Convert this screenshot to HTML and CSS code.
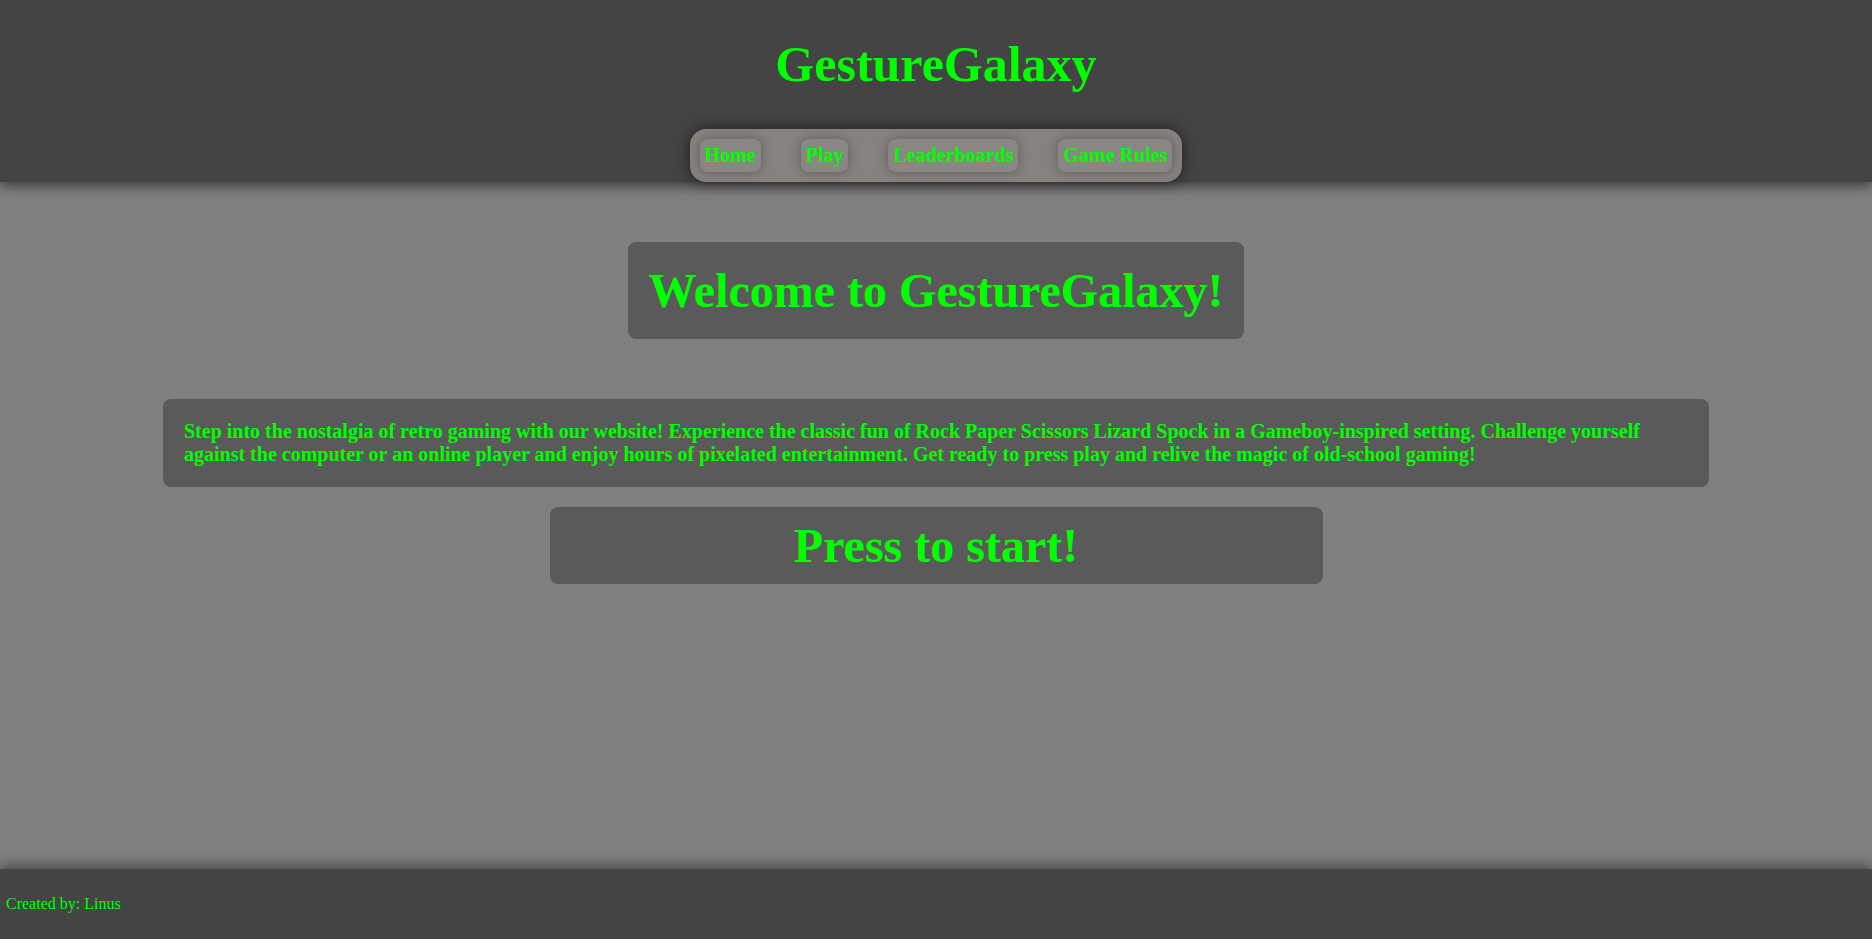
FILE: index.html
```html
<!DOCTYPE html>
<html lang="en">
<head>
<meta charset="utf-8">
<title>GestureGalaxy</title>
<link rel="stylesheet" href="styles.css">
</head>
<body>
<header class="site-header">
  <h1 class="site-title">GestureGalaxy</h1>
  <nav class="nav">
    <a class="nav-item" href="#">Home</a>
    <a class="nav-item" href="#">Play</a>
    <a class="nav-item" href="#">Leaderboards</a>
    <a class="nav-item" href="#">Game Rules</a>
  </nav>
</header>
<main class="main">
  <h2 class="welcome">Welcome to GestureGalaxy!</h2>
  <p class="intro">Step into the nostalgia of retro gaming with our website! Experience the classic fun of Rock Paper Scissors Lizard Spock in a Gameboy-inspired setting. Challenge yourself against the computer or an online player and enjoy hours of pixelated entertainment. Get ready to press play and relive the magic of old-school gaming!</p>
  <button class="start">Press to start!</button>
</main>
<footer class="site-footer">
  <p class="credit">Created by: Linus</p>
</footer>
</body>
</html>
```
FILE: styles.css
```css
html, body {
  margin: 0;
  padding: 0;
  height: 100%;
}
body {
  font-family: "Liberation Serif", "Times New Roman", serif;
  color: #00ff00;
  background: #808080;
  display: flex;
  flex-direction: column;
  min-height: 100vh;
}
.site-header {
  background: #444444;
  display: flex;
  flex-direction: column;
  align-items: center;
  padding-top: 37px;
  box-shadow: 0 4px 12px rgba(0, 0, 0, 0.55);
  position: relative;
  z-index: 2;
}
.site-title {
  margin: 0 0 37px;
  font-size: 50px;
  line-height: 55px;
  font-weight: bold;
}
.nav {
  display: flex;
  gap: 40px;
  padding: 10px;
  background: #858280;
  border-radius: 16px;
  box-shadow: 0 0 16px rgba(0, 0, 0, 0.55);
}
.nav-item {
  color: #00ff00;
  text-decoration: none;
  font-weight: bold;
  font-size: 20px;
  line-height: 23px;
  padding: 5px 5px;
  border-radius: 8px;
  background: #898684;
  box-shadow: 0 0 12px rgba(0, 0, 0, 0.3);
}
.main {
  flex: 1;
  display: flex;
  flex-direction: column;
  align-items: center;
  padding-top: 60px;
}
.welcome {
  margin: 0;
  background: #5a5a5a;
  border-radius: 8px;
  padding: 21px 21px;
  font-size: 48px;
  line-height: 55px;
  font-weight: bold;
}
.intro {
  box-sizing: border-box;
  width: 1546px;
  margin: 60px 0 20px;
  background: #5a5a5a;
  border-radius: 8px;
  padding: 21px 21px;
  font-size: 20px;
  line-height: 23px;
  font-weight: bold;
}
.start {
  box-sizing: border-box;
  width: 773px;
  height: 77px;
  border: none;
  background: #5a5a5a;
  border-radius: 8px;
  color: #00ff00;
  font-family: "Liberation Serif", "Times New Roman", serif;
  font-size: 48px;
  font-weight: bold;
  padding: 0;
  line-height: 55px;
}
.site-footer {
  background: #444444;
  height: 70px;
  box-sizing: border-box;
  padding: 26px 6px 0;
  box-shadow: 0 -4px 12px rgba(0, 0, 0, 0.45);
  position: relative;
}
.credit {
  margin: 0;
  font-size: 16px;
  line-height: 18px;
}
```
